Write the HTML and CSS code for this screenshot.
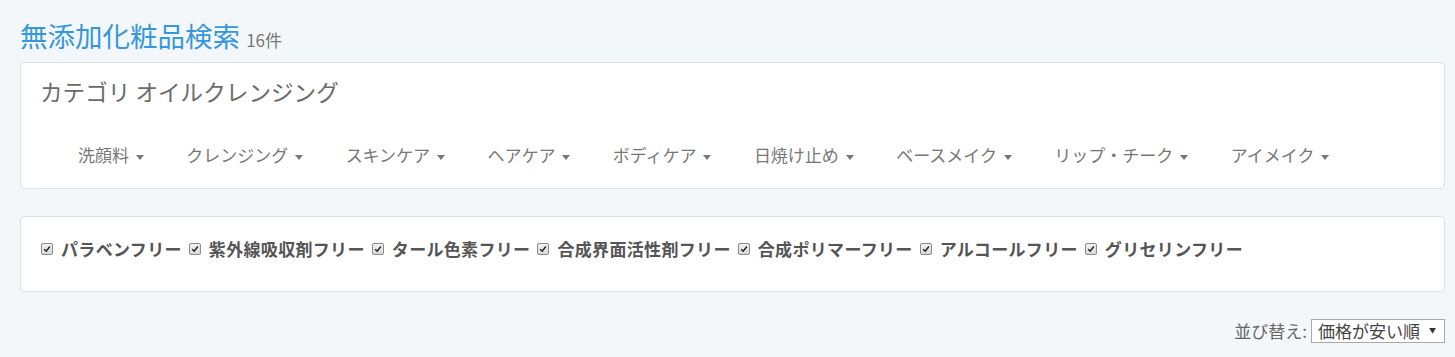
FILE: index.html
```html
<!DOCTYPE html>
<html lang="ja">
<head>
    <meta charset="UTF-8">
    <meta name="viewport" content="width=device-width, initial-scale=1.0">
    <title>無添加化粧品検索</title>
    <link rel="stylesheet" href="styles.css">
</head>
<body>
    <div class="page">
        <h1 class="page-title">無添加化粧品検索 <small class="count">16件</small></h1>

        <div class="panel category-panel">
            <h2 class="category-name">カテゴリ オイルクレンジング</h2>
            <ul class="category-nav">
                <li>洗顔料 <span class="caret"></span></li>
                <li>クレンジング <span class="caret"></span></li>
                <li>スキンケア <span class="caret"></span></li>
                <li>ヘアケア <span class="caret"></span></li>
                <li>ボディケア <span class="caret"></span></li>
                <li>日焼け止め <span class="caret"></span></li>
                <li>ベースメイク <span class="caret"></span></li>
                <li>リップ・チーク <span class="caret"></span></li>
                <li>アイメイク <span class="caret"></span></li>
            </ul>
        </div>

        <div class="panel filter-panel">
            <div class="filters">
                <label class="filter"><span class="check"><svg viewBox="0 0 10 10" width="8" height="8"><path d="M1.5 5.2 L4 7.8 L8.6 1.8" fill="none" stroke="#222" stroke-width="1.8"/></svg></span>パラベンフリー</label>
                <label class="filter"><span class="check"><svg viewBox="0 0 10 10" width="8" height="8"><path d="M1.5 5.2 L4 7.8 L8.6 1.8" fill="none" stroke="#222" stroke-width="1.8"/></svg></span>紫外線吸収剤フリー</label>
                <label class="filter"><span class="check"><svg viewBox="0 0 10 10" width="8" height="8"><path d="M1.5 5.2 L4 7.8 L8.6 1.8" fill="none" stroke="#222" stroke-width="1.8"/></svg></span>タール色素フリー</label>
                <label class="filter"><span class="check"><svg viewBox="0 0 10 10" width="8" height="8"><path d="M1.5 5.2 L4 7.8 L8.6 1.8" fill="none" stroke="#222" stroke-width="1.8"/></svg></span>合成界面活性剤フリー</label>
                <label class="filter"><span class="check"><svg viewBox="0 0 10 10" width="8" height="8"><path d="M1.5 5.2 L4 7.8 L8.6 1.8" fill="none" stroke="#222" stroke-width="1.8"/></svg></span>合成ポリマーフリー</label>
                <label class="filter"><span class="check"><svg viewBox="0 0 10 10" width="8" height="8"><path d="M1.5 5.2 L4 7.8 L8.6 1.8" fill="none" stroke="#222" stroke-width="1.8"/></svg></span>アルコールフリー</label>
                <label class="filter"><span class="check"><svg viewBox="0 0 10 10" width="8" height="8"><path d="M1.5 5.2 L4 7.8 L8.6 1.8" fill="none" stroke="#222" stroke-width="1.8"/></svg></span>グリセリンフリー</label>
            </div>
        </div>

        <div class="sort-row">
            <span class="sort-label">並び替え:</span>
            <div class="sort-select">
                <select>
                    <option>価格が安い順</option>
                    <option>価格が高い順</option>
                </select>
                <span class="select-arrow">▼</span>
            </div>
        </div>
    </div>
</body>
</html>
```

FILE: styles.css
```css
body {
    margin: 0;
    background-color: #f4f7fa;
    font-family: "Noto Sans CJK JP", "Noto Sans", sans-serif;
    color: #555;
}
.page {
    padding: 0 10px 0 20px;
}
.page-title {
    margin: 0 0 11px 0;
    padding-top: 19px;
    font-size: 27.5px;
    line-height: 32px;
    height: 32px;
    font-weight: normal;
    color: #3498db;
}
.count {
    font-size: 17px;
    line-height: 1;
    color: #777;
}
.panel {
    background-color: #fff;
    border: 1px solid #d6e2ec;
    border-radius: 4px;
}
.category-panel {
    padding: 17px 0 21px 0;
}
.category-name {
    margin: 0;
    padding-left: 19px;
    font-size: 22.6px;
    line-height: 24px;
    font-weight: normal;
    color: #6b6b6b;
}
.category-nav {
    display: flex;
    list-style: none;
    margin: 39px 0 0 0;
    padding: 0 0 0 36px;
}
.category-nav li {
    padding: 0 21.5px 0 21px;
    font-size: 17px;
    line-height: 24px;
    color: #777;
    white-space: nowrap;
}
.caret {
    display: inline-block;
    width: 0;
    height: 0;
    margin-left: 3px;
    vertical-align: middle;
    border-top: 5px solid #777;
    border-left: 4px solid transparent;
    border-right: 4px solid transparent;
}
.filter-panel {
    margin-top: 27px;
    padding: 20px 0 30px 20px;
}
.filters {
    display: flex;
    flex-wrap: wrap;
    gap: 0 7px;
}
.filter {
    display: flex;
    align-items: center;
    font-size: 17px;
    line-height: 24px;
    font-weight: bold;
    letter-spacing: 0.33px;
    color: #555;
}
.check {
    display: inline-flex;
    align-items: center;
    justify-content: center;
    width: 10px;
    height: 10px;
    margin: 0 8px 0 0;
    border: 1px solid #8a8a8a;
    border-radius: 2px;
    background: linear-gradient(#f2f2f2, #d8d8d8);
}
.sort-row {
    display: flex;
    justify-content: flex-end;
    align-items: center;
    gap: 4px;
    margin-top: 27px;
}
.sort-label {
    font-size: 17px;
    line-height: 24px;
    color: #666;
}
.sort-select {
    position: relative;
}
.sort-select select {
    display: block;
    appearance: none;
    -webkit-appearance: none;
    width: 134px;
    height: 24px;
    padding: 0 22px 0 6px;
    border: 1px solid #a9a9a9;
    border-radius: 0;
    background-color: #fff;
    font-family: "Noto Sans CJK JP", "Noto Sans", sans-serif;
    font-size: 17px;
    line-height: 22px;
    color: #444;
}
.select-arrow {
    position: absolute;
    right: 9px;
    top: 6px;
    font-size: 7px;
    line-height: 10px;
    color: #333;
    pointer-events: none;
}
```
